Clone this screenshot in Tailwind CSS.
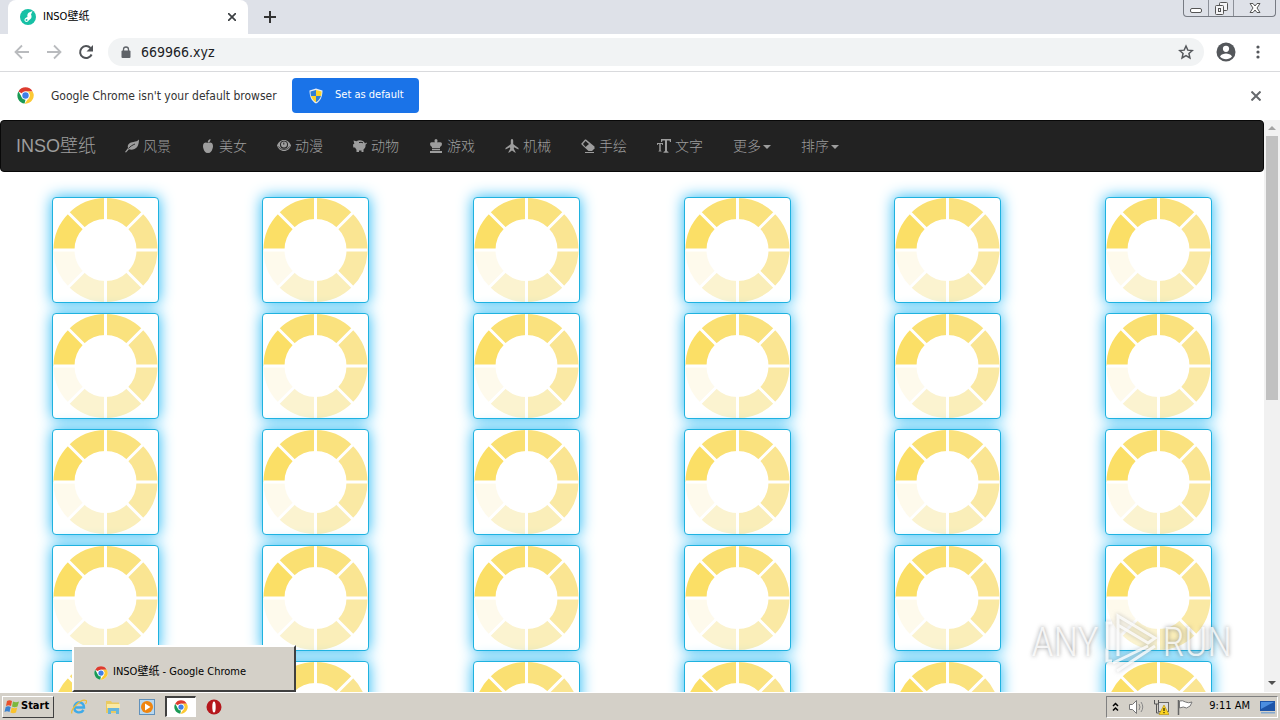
<!DOCTYPE html>
<html lang="zh">
<head>
    <meta charset="UTF-8">
    <title>INSO壁纸</title>
    <script src="https://cdn.jsdelivr.net/npm/@tailwindcss/browser@4"></script>
</head>
<body class="h-screen overflow-hidden flex flex-col bg-white text-black font-['DejaVu_Sans_Condensed','Noto_Sans_CJK_SC',sans-serif] text-[11px]">

<!-- Shared drawings -->
<svg class="hidden">
    <symbol id="chrome" viewBox="0 0 48 48">
        <circle cx="24" cy="24" r="23" fill="#fff"/>
        <path d="M24 1a23 23 0 0 1 19.9 11.5H24A11.5 11.5 0 0 0 14 18.200L4.100 12.500A23 23 0 0 1 24 1z" fill="#dd3b2f"/>
        <path d="M4.100 12.500L14 29.700A11.500 11.500 0 0 0 24 35.500L21.500 46.800A23 23 0 0 1 4.100 12.500z" fill="#1a9a55"/>
        <path d="M24 12.500h19.900A23 23 0 0 1 22 46.900L34 29.700A11.500 11.500 0 0 0 24 12.500z" fill="#fcc934"/>
        <circle cx="24" cy="24" r="11.500" fill="#fff"/>
        <circle cx="24" cy="24" r="9" fill="#3f7fe8"/>
    </symbol>
    <symbol id="loader" viewBox="0 0 104 104">
        <g fill="none" stroke-width="21" stroke-dasharray="32.600 300">
            <circle cx="52" cy="52" r="41.500" stroke="#fbdf66" transform="rotate(180 52 52)"/>
            <circle cx="52" cy="52" r="41.500" stroke="#fae072" transform="rotate(225 52 52)"/>
            <circle cx="52" cy="52" r="41.500" stroke="#fae27e" transform="rotate(270 52 52)"/>
            <circle cx="52" cy="52" r="41.500" stroke="#fae592" transform="rotate(315 52 52)"/>
            <circle cx="52" cy="52" r="41.500" stroke="#fae9a4" transform="rotate(0 52 52)"/>
            <circle cx="52" cy="52" r="41.500" stroke="#faeeb9" transform="rotate(45 52 52)"/>
            <circle cx="52" cy="52" r="41.500" stroke="#fbf3d0" transform="rotate(90 52 52)"/>
            <circle cx="52" cy="52" r="41.500" stroke="#fefaec" transform="rotate(135 52 52)"/>
        </g>
        <path d="M52 0v104M0 52h104M14 14l76 76M90 14L14 90" stroke="#fff" stroke-width="3"/>
    </symbol>
</svg>

<!-- Tab strip -->
<header class="flex h-[34px] shrink-0 bg-[#dee1e8]">
    <div class="ml-2 flex w-60 items-center rounded-t-lg bg-white pl-3 pr-2">
        <svg class="mr-[7px] size-4" viewBox="0 0 16 16">
            <circle cx="8" cy="8" r="8" fill="#16c0a5"/>
            <path d="M9 3.500l3.500-1.500L11 5.500c1.500 3-.5 5-2 5.500-1 2.500-4 2.500-4.500.5S6 8.500 7.500 8c-.5-2 0-3.500 1.500-4.500z" fill="#fff"/>
            <circle cx="6.500" cy="11" r="1" fill="#16c0a5"/>
        </svg>
        <span class="grow">INSO壁纸</span>
        <button aria-label="Close tab" class="grid size-4 place-items-center">
            <svg class="size-2" viewBox="0 0 8 8"><path d="M0 0l8 8M8 0L0 8" stroke="#3c4043" stroke-width="1.700"/></svg>
        </button>
    </div>
    <button aria-label="New tab" class="ml-3.5 grid w-4 place-items-center">
        <svg class="size-3" viewBox="0 0 12 12"><path d="M6 0v12M0 6h12" stroke="#333" stroke-width="2"/></svg>
    </button>
    <div class="ml-auto mr-1 flex h-[17px] rounded-b border border-t-0 border-[#777b83] *:grid *:place-items-center">
        <button aria-label="Minimize" class="w-6">
            <svg class="mt-1 h-[5px] w-3" viewBox="0 0 12 5"><rect x=".5" y=".5" width="11" height="4" rx="1.500" fill="#fff" stroke="#555"/></svg>
        </button>
        <button aria-label="Restore" class="w-[26px] border-x border-[#8c9098]">
            <svg class="size-[13px]" viewBox="0 0 13 13" fill="#f4f4f6" stroke="#555"><rect x="4.500" y=".5" width="8" height="8" rx="1"/><rect x=".5" y="3.500" width="8" height="9" rx="1"/><rect x="3.500" y="6.500" width="2" height="3"/></svg>
        </button>
        <button aria-label="Close" class="w-[41px]">
            <svg class="h-2.5 w-3" viewBox="0 0 12 10"><path d="M1 .5h3l2 2.500 2-2.500h3L8 5l3 4.500H8L6 7 4 9.500H1L4 5z" fill="#fff" stroke="#555"/></svg>
        </button>
    </div>
</header>

<!-- Toolbar -->
<div class="flex h-[38px] shrink-0 items-center border-b border-[#d9dadd] pb-px pl-3.5 pr-4">
    <button aria-label="Back" class="mr-4"><svg class="size-4" viewBox="0 0 16 16"><path d="M15 8H2M8 1.500L1.500 8 8 14.500" fill="none" stroke="#b9bbbe" stroke-width="1.800"/></svg></button>
    <button aria-label="Forward" class="mr-4"><svg class="size-4" viewBox="0 0 16 16"><path d="M1 8h13M8 1.500L14.500 8 8 14.500" fill="none" stroke="#b9bbbe" stroke-width="1.800"/></svg></button>
    <button aria-label="Reload" class="mr-3.5"><svg class="size-4" viewBox="0 0 16 16"><path d="M13.600 10.500A6 6 0 1 1 12.500 4" fill="none" stroke="#505357" stroke-width="2"/><path d="M15 1v6.500H8.500z" fill="#505357"/></svg></button>
    <div class="flex h-7 grow items-center rounded-full bg-[#f1f3f4] pl-3 pr-2.5">
        <svg class="mr-[9px] size-3 shrink-0" viewBox="0 0 12 12"><path d="M3.500 5V3.500a2.500 2.500 0 0 1 5 0V5" fill="none" stroke="#5f6368" stroke-width="1.300"/><rect x="1.500" y="4.500" width="9" height="7.500" rx="1" fill="#5f6368"/></svg>
        <input aria-label="Address" value="669966.xyz" class="grow bg-transparent text-sm text-[#202124] outline-none">
        <button aria-label="Bookmark"><svg class="size-4" viewBox="0 0 24 24"><path d="M12 3l2.700 6.200 6.800.6-5.100 4.500 1.500 6.700L12 17.500 6.100 21l1.500-6.700-5.100-4.500 6.800-.6z" fill="none" stroke="#55585c" stroke-width="2.200"/></svg></button>
    </div>
    <button aria-label="Profile" class="ml-3 mr-4"><svg class="size-5" viewBox="0 0 20 20"><circle cx="10" cy="10" r="9.500" fill="#54575b"/><circle cx="10" cy="6.800" r="3.100" fill="#fff"/><path d="M4 14.500c1-2.300 4-3 6-3s5 .7 6 3c-3 3.500-9 3.500-12 0z" fill="#fff"/></svg></button>
    <button aria-label="Menu" class="w-3"><svg class="mx-auto h-3.5 w-1" viewBox="0 0 4 14" fill="#54575b"><circle cx="2" cy="2" r="1.600"/><circle cx="2" cy="7" r="1.600"/><circle cx="2" cy="12" r="1.600"/></svg></button>
</div>

<!-- Default browser bar -->
<div class="flex h-12 shrink-0 items-center bg-white pb-px pl-[17px] pr-[19px]">
    <svg class="mr-[17px] size-[17px]"><use href="#chrome"/></svg>
    <span class="text-xs text-[#333] w-[241px] whitespace-nowrap">Google Chrome isn't your default browser</span>
    <button class="flex h-[35px] w-[127px] items-center rounded bg-[#1a73e8] pl-4 text-white whitespace-nowrap">
        <svg class="mr-[11px] size-4" viewBox="0 0 16 16"><path d="M8 .5l6.500 2C14.500 9 12 13.500 8 15.500 4 13.500 1.500 9 1.500 2.500z" fill="#e8edf3"/><path d="M8 2v6H3c-.4-1.500-.5-3-.5-4.500z" fill="#2f7fd6"/><path d="M8 2v6h5c.4-1.500.5-3 .5-4.500z" fill="#fbd328"/><path d="M3 8h5v6.200C5.500 13 3.800 10.500 3 8z" fill="#fbd328"/><path d="M13 8H8v6.200c2.500-1.200 4.200-3.700 5-6.200z" fill="#2f7fd6"/></svg>
        Set as default
    </button>
    <button aria-label="Dismiss" class="ml-auto"><svg class="size-2.5" viewBox="0 0 10 10"><path d="M.5.5l9 9M9.500.5l-9 9" stroke="#66696d" stroke-width="2"/></svg></button>
</div>

<!-- Page -->
<div class="flex min-h-0 grow">
    <main class="grow overflow-hidden">
        <nav class="mb-[25px] flex h-[52px] items-center rounded border border-[#080808] bg-[#222] pl-[15px] text-sm text-[#9d9d9d] font-['Liberation_Sans','Noto_Sans_CJK_SC',sans-serif] font-light">
            <a href="#" class="mr-3.5 text-lg">INSO壁纸</a>
            <ul class="flex [&_a]:flex [&_a]:items-center [&_a]:px-[15px] [&_svg]:mr-1 [&_svg]:size-3.5 [&_svg]:fill-current">
                <li><a href="#"><svg viewBox="0 0 14 14"><path d="M14 .5c0 4-1 8-4.500 9.500-2 .9-4 .8-5.500.3L1 13.500l-1-.5 3-4C2 5 5 3.500 8.500 3 11 2.500 12.500 2 14 .5z"/><path d="M3.500 9.500C5 7.500 7.500 6 10 5" stroke="#222" fill="none" stroke-width=".9"/></svg>风景</a></li>
                <li><a href="#"><svg viewBox="0 0 14 14"><path d="M7 4c2-1.200 5-.7 5 3 0 3-2 7-4 7-.5 0-.7-.3-1-.3s-.5.3-1 .3c-2 0-4-4-4-7 0-3.700 3-4.200 5-3z"/><path d="M6.800 4C6.500 1.500 8 .3 9.500 0c.2 2-1 3-2.700 4z"/></svg>美女</a></li>
                <li><a href="#"><svg viewBox="0 0 14 14"><path d="M7 1c3.500 0 6 2.500 7 5.500-1 3-3.500 5.500-7 5.500s-6-2.500-7-5.500C1 3.500 3.500 1 7 1z"/><circle cx="7" cy="5.800" r="4" fill="#222"/><circle cx="7" cy="5.600" r="3"/><path d="M1.500 7.500C3.500 11.500 10.500 11.500 12.500 7.500" stroke="#222" fill="none" stroke-width=".7"/><path d="M6.800 3.600v2" stroke="#222"/></svg>动漫</a></li>
                <li><a href="#"><svg viewBox="0 0 14 14"><path d="M.5 1.500l3 .8C6 .5 10.500 1 12 4.500l1.200-1 .8.700-1.500 1.600c.3 2.200-.5 3.700-2 4.700V13H8.500v-1.500H6V13H3.500v-2.300L2 8.500H.3l-.3-3 1.300-.7z"/><path d="M6 3.600q2-.8 4 .2" stroke="#222" fill="none"/></svg>动物</a></li>
                <li><a href="#"><svg viewBox="0 0 14 14"><path d="M5.500 1.500Q5.500 0 7 0t1.500 1.500Q8.500 3 8 3.200h3.500Q13 3.200 13 5q0 1.800-2 3v1.200H3V8Q1 6.800 1 5q0-1.800 1.500-1.800H6Q5.500 3 5.500 1.500zM3 10h8v1.200H3zM1 12h12v2H1z"/></svg>游戏</a></li>
                <li><a href="#"><svg viewBox="0 0 14 14"><path d="M7 0c.9 0 1.200.9 1.200 1.800V5l.8.8L13.500 9v1.500L9 8.200l-.2 1.600L10.500 13v1L7 11.500 3.500 14v-1l1.700-3.200L5 8.200.5 10.500V9L5 5.800l.8-.8V1.800C5.800.9 6.100 0 7 0z"/></svg>机械</a></li>
                <li><a href="#"><svg viewBox="0 0 14 14"><path d="M5 .5l8.500 7v2L11 12H7.500L.5 5.500v-1L4 .5z"/><path d="M4.500 2l3.500 3-3.500 3L2 5z" fill="#222"/><path d="M4 13h9v1H4z"/></svg>手绘</a></li>
                <li><a href="#"><svg viewBox="0 0 14 14"><path d="M4 0h10v3h-1l-.5-1.500H10V12l1.500 1v.8h-5V13L8 12V1.500H5.500L5 3H4zM0 4h6v2h-.7L5 5H3.700v6.500l.8.5v.6h-3V12l.8-.5V5H1L.7 6H0z"/></svg>文字</a></li>
                <li><a href="#">更多<span class="ml-0.5 mt-0.5 border-x-4 border-t-4 border-x-transparent border-t-current"></span></a></li>
                <li><a href="#">排序<span class="ml-0.5 mt-0.5 border-x-4 border-t-4 border-x-transparent border-t-current"></span></a></li>
            </ul>
        </nav>

        <div id="wallpapers" class="grid grid-cols-6 justify-items-center gap-y-2.5"></div>
    </main>

    <!-- Scrollbar -->
    <div class="flex w-4 shrink-0 flex-col items-center bg-[#f1f1f1]">
        <svg class="my-[5px] h-1.5 w-2 shrink-0" viewBox="0 0 8 6"><path d="M0 5l4-4 4 4z" fill="#a3a3a3"/></svg>
        <div class="h-[264px] w-3 bg-[#c1c1c1]"></div>
        <svg class="mb-1.5 mt-auto h-1.5 w-2 shrink-0" viewBox="0 0 8 6"><path d="M0 1l4 4 4-4z" fill="#505050"/></svg>
    </div>
</div>

<!-- Watermark -->
<div class="absolute bottom-[46px] right-12 flex items-center font-['Roboto_Condensed','Open_Sans_Condensed','Noto_Sans_ExtraCondensed','Noto_Sans_Condensed',Roboto,sans-serif] font-light text-[40px] leading-none text-white/80 [text-shadow:0_0_4px_#777c]">
    <span>ANY</span>
    <svg class="mx-1 h-[62px] w-14 drop-shadow-[0_0_2px_#8889]" viewBox="0 0 56 62" fill="none" stroke="#fff" stroke-opacity=".8" stroke-width="3"><path d="M15 44V4l37 22-7 5-30-18M9 11H4v38h5M10 51l35-17M14 59l38-25"/></svg>
    <span>RUN</span>
</div>

<!-- Taskbar preview -->
<div class="absolute bottom-7 left-[72px] flex h-[47px] w-56 items-center border-2 border-[#404040] border-l-white border-t-white bg-[#d4d0c8] pl-5 pt-2">
    <svg class="mr-[5px] size-3.5"><use href="#chrome"/></svg>
    <span>INSO壁纸 - Google Chrome</span>
</div>

<!-- Taskbar -->
<footer class="relative flex h-7 shrink-0 items-center border-t border-white bg-[#d4d0c8] px-0.5">
    <button class="mr-3.5 flex h-[22px] w-[52px] items-center border border-[#404040] border-l-white border-t-white pl-px font-bold">
        <svg class="mr-px size-4 shrink-0" viewBox="0 0 16 16"><path d="M3 2q2.500-1.500 5 0L7 7q-2.500-1.500-5 0z" fill="#e8502b"/><path d="M9 2.500q3 1.500 6 0L13.500 7.500q-3 1.500-5.500 0z" fill="#7cb83c"/><path d="M1.700 8q2.500-1.500 5 0l-1.200 5q-2.500-1.500-5 0z" fill="#3a82d0"/><path d="M7.700 8.500q3 1.500 5.500 0L12 13.500q-3 1.500-5.500 0z" fill="#f9c22c"/></svg>
        Start
    </button>
    <div class="flex items-center">
        <button aria-label="Internet Explorer" class="ml-[3px] mr-[18px]"><svg class="size-4" viewBox="0 0 16 16" fill="none"><path d="M3.500 8.500h9.500C13 1.500 3.500 1.500 3.300 8.500c0 6 7 6 9.200 2.500" stroke="#3eaae8" stroke-width="2.400"/><path d="M1 14.500C-1 11 10-1 15 1.500c1 .7.500 2-.5 3.500" stroke="#eebc35" stroke-width="1.200"/></svg></button>
        <button aria-label="Explorer" class="mr-[18px]"><svg class="size-4" viewBox="0 0 16 16"><path d="M1 2h5l1 1.500h7V14H1z" fill="#e9ca62"/><path d="M2 5h13v4H2z" fill="#fae9a3"/><path d="M3 9h11v6h-3v-3H6v3H3z" fill="#66b5dc"/></svg></button>
        <button aria-label="Media Player" class="mr-2.5"><svg class="size-4" viewBox="0 0 16 16"><rect x=".5" y=".5" width="15" height="15" fill="#b8d8f0" stroke="#6191bb"/><circle cx="8" cy="8" r="6" fill="#ef8510"/><path d="M6 4.500v7L11.500 8z" fill="#fff"/></svg></button>
        <button aria-label="Google Chrome" class="grid h-[21px] w-[31px] place-items-center border border-l-2 border-t-2 border-white border-l-[#404040] border-t-[#404040] bg-white"><svg class="size-3.5"><use href="#chrome"/></svg></button>
        <button aria-label="Opera" class="ml-2.5"><svg class="size-4" viewBox="0 0 16 16"><circle cx="8" cy="8" r="7.500" fill="#b5171c"/><ellipse cx="8" cy="8" rx="1.700" ry="5.500" fill="#fff"/></svg></button>
    </div>
    <div class="ml-auto flex h-[22px] items-center border border-white border-l-[#808080] border-t-[#808080] pl-[5px]">
        <svg class="mr-2.5 h-2.5 w-[7px]" viewBox="0 0 7 10"><path d="M1 4l2.500-2.500L6 4M1 8.500L3.500 6 6 8.500" fill="none" stroke="#000" stroke-width="1.500"/></svg>
        <svg class="mr-2 size-4" viewBox="0 0 16 16"><path d="M.5 5.500h3l4-4v13l-4-4h-3z" fill="#fff" stroke="#777"/><path d="M10 5q2 3 0 6M12 3q3.500 5 0 10" fill="none" stroke="#888"/></svg>
        <svg class="mr-2 size-4" viewBox="0 0 16 16"><rect x="5.500" y="3.500" width="10" height="9" fill="#ddd" stroke="#666"/><path d="M1.500 1v4h4V1M3.500 5v9h3" fill="none" stroke="#555"/><path d="M11 6l5 9.500H6z" fill="#fbd320" stroke="#b18c00" stroke-width=".6"/><path d="M11 9v3M11 13v1.200" stroke="#000"/></svg>
        <svg class="mr-4 size-4" viewBox="0 0 16 16"><path d="M1.500 1v15" stroke="#666" stroke-width="1.500"/><path d="M2.500 2q3-1 6 1 3 1.500 6.500 0-1 5-5.500 6-3-2-7 0z" fill="#fff" stroke="#777"/></svg>
        <span class="mr-2.5">9:11 AM</span>
        <svg class="mr-px h-3.5 w-4" viewBox="0 0 16 14"><path d="M0 1h15v10H0z" fill="#1d55a8"/><path d="M1 2h13L1 9z" fill="#4b8ee0"/><path d="M1 12h14v1.500H1z" fill="#83a8cf"/></svg>
    </div>
</footer>

<script>
    const card = '<a href="#" aria-label="Wallpaper" class="block h-[106px] w-[107px] rounded border border-[#1fb2df] bg-white shadow-[0_0_15px_#22b8f5]"><svg class="size-full"><use href="#loader"/></svg></a>';
    document.getElementById('wallpapers').innerHTML = card.repeat(30);
</script>
</body>
</html>
